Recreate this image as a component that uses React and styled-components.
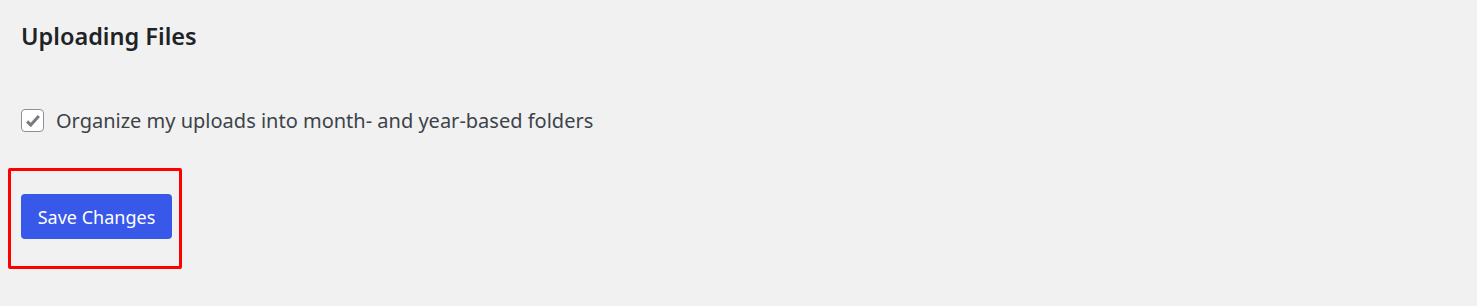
import styled, { createGlobalStyle } from "styled-components";

const Global = createGlobalStyle`
  html, body {
    margin: 0;
    background: #f1f1f1;
  }
  body {
    font-family: "Noto Sans", "Open Sans", sans-serif;
  }
`;

const Page = styled.div`
  display: flex;
  flex-direction: column;
  align-items: flex-start;
  padding: 18px 0 0 21px;
  height: 306px;
  box-sizing: border-box;
`;

const Title = styled.h2`
  margin: 0;
  font-size: 23.5px;
  font-weight: 600;
  color: #1d2327;
  line-height: 36px;
`;

const Option = styled.label`
  display: flex;
  align-items: center;
  gap: 12px;
  margin-top: 53px;
  font-size: 20px;
  color: #3c434a;
  cursor: pointer;
`;

const Box = styled.span`
  width: 21px;
  height: 21px;
  border: 1px solid #8c8f94;
  border-radius: 4px;
  background: #fff;
  display: flex;
  align-items: center;
  justify-content: center;
  flex-shrink: 0;
`;

const Highlight = styled.div`
  margin: 34px 0 0 -13px;
  padding: 23px 7px 27px 10px;
  border: 3px solid #ff0000;
  border-radius: 2px;
`;

const SaveButton = styled.button`
  display: block;
  width: 151px;
  height: 45px;
  border: none;
  border-radius: 4px;
  background: #3858e9;
  color: #fff;
  font-family: inherit;
  font-size: 18px;
  cursor: pointer;
`;

const App = () => (
  <>
    <Global />
    <Page>
      <Title>Uploading Files</Title>
      <Option>
        <Box>
          <svg width="18" height="18" viewBox="0 0 20 20">
            <path
              d="M3.5 10.5l4 4 9-10"
              fill="none"
              stroke="#787c82"
              strokeWidth="3.4"
              strokeLinejoin="round"
            />
          </svg>
        </Box>
        Organize my uploads into month- and year-based folders
      </Option>
      <Highlight>
        <SaveButton>Save Changes</SaveButton>
      </Highlight>
    </Page>
  </>
);

export default App;
